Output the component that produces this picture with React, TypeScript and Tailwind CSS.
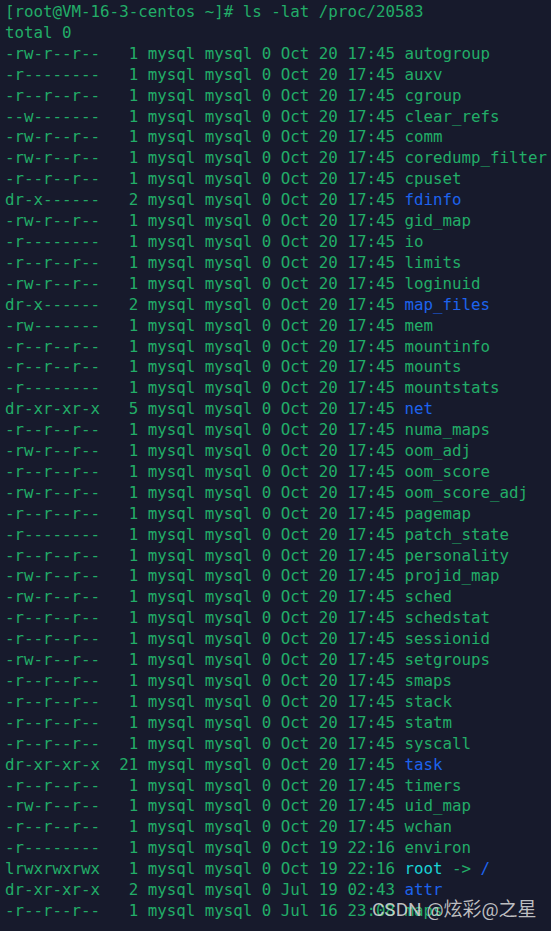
import React from "react"

type Entry = {
  perm: string
  links: string
  date: string
  name: string
  kind?: "dir" | "link"
}

const entries: Entry[] = [
  { perm: "-rw-r--r--", links: "1", date: "Oct 20 17:45", name: "autogroup" },
  { perm: "-r--------", links: "1", date: "Oct 20 17:45", name: "auxv" },
  { perm: "-r--r--r--", links: "1", date: "Oct 20 17:45", name: "cgroup" },
  { perm: "--w-------", links: "1", date: "Oct 20 17:45", name: "clear_refs" },
  { perm: "-rw-r--r--", links: "1", date: "Oct 20 17:45", name: "comm" },
  { perm: "-rw-r--r--", links: "1", date: "Oct 20 17:45", name: "coredump_filter" },
  { perm: "-r--r--r--", links: "1", date: "Oct 20 17:45", name: "cpuset" },
  { perm: "dr-x------", links: "2", date: "Oct 20 17:45", name: "fdinfo", kind: "dir" },
  { perm: "-rw-r--r--", links: "1", date: "Oct 20 17:45", name: "gid_map" },
  { perm: "-r--------", links: "1", date: "Oct 20 17:45", name: "io" },
  { perm: "-r--r--r--", links: "1", date: "Oct 20 17:45", name: "limits" },
  { perm: "-rw-r--r--", links: "1", date: "Oct 20 17:45", name: "loginuid" },
  { perm: "dr-x------", links: "2", date: "Oct 20 17:45", name: "map_files", kind: "dir" },
  { perm: "-rw-------", links: "1", date: "Oct 20 17:45", name: "mem" },
  { perm: "-r--r--r--", links: "1", date: "Oct 20 17:45", name: "mountinfo" },
  { perm: "-r--r--r--", links: "1", date: "Oct 20 17:45", name: "mounts" },
  { perm: "-r--------", links: "1", date: "Oct 20 17:45", name: "mountstats" },
  { perm: "dr-xr-xr-x", links: "5", date: "Oct 20 17:45", name: "net", kind: "dir" },
  { perm: "-r--r--r--", links: "1", date: "Oct 20 17:45", name: "numa_maps" },
  { perm: "-rw-r--r--", links: "1", date: "Oct 20 17:45", name: "oom_adj" },
  { perm: "-r--r--r--", links: "1", date: "Oct 20 17:45", name: "oom_score" },
  { perm: "-rw-r--r--", links: "1", date: "Oct 20 17:45", name: "oom_score_adj" },
  { perm: "-r--r--r--", links: "1", date: "Oct 20 17:45", name: "pagemap" },
  { perm: "-r--------", links: "1", date: "Oct 20 17:45", name: "patch_state" },
  { perm: "-r--r--r--", links: "1", date: "Oct 20 17:45", name: "personality" },
  { perm: "-rw-r--r--", links: "1", date: "Oct 20 17:45", name: "projid_map" },
  { perm: "-rw-r--r--", links: "1", date: "Oct 20 17:45", name: "sched" },
  { perm: "-r--r--r--", links: "1", date: "Oct 20 17:45", name: "schedstat" },
  { perm: "-r--r--r--", links: "1", date: "Oct 20 17:45", name: "sessionid" },
  { perm: "-rw-r--r--", links: "1", date: "Oct 20 17:45", name: "setgroups" },
  { perm: "-r--r--r--", links: "1", date: "Oct 20 17:45", name: "smaps" },
  { perm: "-r--r--r--", links: "1", date: "Oct 20 17:45", name: "stack" },
  { perm: "-r--r--r--", links: "1", date: "Oct 20 17:45", name: "statm" },
  { perm: "-r--r--r--", links: "1", date: "Oct 20 17:45", name: "syscall" },
  { perm: "dr-xr-xr-x", links: "21", date: "Oct 20 17:45", name: "task", kind: "dir" },
  { perm: "-r--r--r--", links: "1", date: "Oct 20 17:45", name: "timers" },
  { perm: "-rw-r--r--", links: "1", date: "Oct 20 17:45", name: "uid_map" },
  { perm: "-r--r--r--", links: "1", date: "Oct 20 17:45", name: "wchan" },
  { perm: "-r--------", links: "1", date: "Oct 19 22:16", name: "environ" },
  { perm: "lrwxrwxrwx", links: "1", date: "Oct 19 22:16", name: "root", kind: "link" },
  { perm: "dr-xr-xr-x", links: "2", date: "Jul 19 02:43", name: "attr", kind: "dir" },
  { perm: "-r--r--r--", links: "1", date: "Jul 16 23:08", name: "maps" },
]

function Name({ e }: { e: Entry }) {
  if (e.kind === "dir") return <span className="text-[#1d63ee]">{e.name}</span>
  if (e.kind === "link")
    return (
      <>
        <span className="text-[#19d3d6]">{e.name}</span>
        {" -> "}
        <span className="text-[#1d63ee]">/</span>
      </>
    )
  return <span>{e.name}</span>
}

export default function App() {
  return (
    <div className="relative w-[551px] h-[931px] overflow-hidden bg-[#171a2c]">
      <pre
        className="m-0 pl-[5px] pt-[2px] text-[15.8px] leading-[20.9px] text-[#22ad68] whitespace-pre"
        style={{ fontFamily: '"DejaVu Sans Mono", monospace' }}
      >
        <div>[root@VM-16-3-centos ~]# ls -lat /proc/20583</div>
        <div>total 0</div>
        {entries.map((e) => (
          <div key={e.name}>
            {e.perm + " " + e.links.padStart(3, " ") + " mysql mysql 0 " + e.date + " "}
            <Name e={e} />
          </div>
        ))}
      </pre>

      {/* watermark */}
      <div
        className="absolute left-[372px] top-[898px] text-[19px] leading-[24px] text-[#dcdcdc]/85"
        style={{ fontFamily: 'Roboto, "Noto Sans CJK SC", sans-serif' }}
      >
        CSDN @炫彩@之星
      </div>
    </div>
  )
}
